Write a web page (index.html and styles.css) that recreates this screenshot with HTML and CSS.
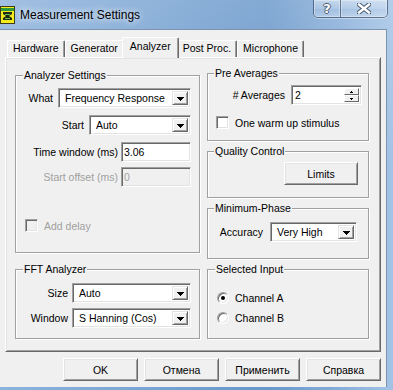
FILE: index.html
```html
<!DOCTYPE html>
<html lang="en">
<head>
    <meta charset="UTF-8">
    <title>Measurement Settings</title>
    <link rel="stylesheet" href="styles.css">
</head>
<body>
    <div class="window">
        <div class="titlebar">
            <svg class="app-icon" width="15" height="18" viewBox="0 0 15 18">
                <rect x="0" y="0" width="15" height="18" fill="#3d3d1a"/>
                <rect x="1" y="1" width="13" height="16" fill="#f4ea1c"/>
                <rect x="1" y="2" width="13" height="3" fill="#2f9a3a"/>
                <path d="M3 6h9v2l-3 2 3 2v2H3v-2l3-2-3-2z" fill="#1d2a14"/>
                <rect x="5" y="8" width="5" height="1" fill="#6cc04a"/>
                <rect x="5" y="12" width="5" height="1" fill="#6cc04a"/>
            </svg>
            <span class="title">Measurement Settings</span>
            <div class="caption-buttons">
                <div class="cap-btn cap-help">?</div>
                <div class="cap-btn cap-close">
                    <svg width="14" height="11" viewBox="0 0 14 11">
                        <path d="M2 1.5l10 8M12 1.5l-10 8" stroke="#4a5d74" stroke-width="4.4" stroke-linecap="square"/>
                        <path d="M2 1.5l10 8M12 1.5l-10 8" stroke="#fff" stroke-width="2.4" stroke-linecap="square"/>
                    </svg>
                </div>
            </div>
        </div>

        <div class="client">
            <div class="tabs">
                <div class="tab">Hardware</div>
                <div class="tab">Generator</div>
                <div class="tab active">Analyzer</div>
                <div class="tab">Post Proc.</div>
                <div class="tab">Microphone</div>
            </div>

            <div class="panel">
                <div class="col col-left">
                    <fieldset class="group group-analyzer">
                        <legend>Analyzer Settings</legend>
                        <div class="row">
                            <span class="label">What</span>
                            <div class="combo combo-what">
                                <span class="combo-text">Frequency Response</span>
                                <span class="drop-btn"><svg width="7" height="4" viewBox="0 0 7 4"><path d="M0 0h7v1h-1v1h-1v1h-1v1h-1v-1h-1v-1h-1v-1h-1z"/></svg></span>
                            </div>
                        </div>
                        <div class="row row-start">
                            <span class="label">Start</span>
                            <div class="combo combo-start">
                                <span class="combo-text">Auto</span>
                                <span class="drop-btn"><svg width="7" height="4" viewBox="0 0 7 4"><path d="M0 0h7v1h-1v1h-1v1h-1v1h-1v-1h-1v-1h-1v-1h-1z"/></svg></span>
                            </div>
                        </div>
                        <div class="row row-time">
                            <span class="label">Time window (ms)</span>
                            <div class="edit edit-short">3.06</div>
                        </div>
                        <div class="row row-offset">
                            <span class="label disabled">Start offset (ms)</span>
                            <div class="edit edit-short disabled">0</div>
                        </div>
                        <div class="check-row row-delay">
                            <span class="checkbox disabled"></span>
                            <span class="label disabled">Add delay</span>
                        </div>
                    </fieldset>

                    <fieldset class="group group-fft">
                        <legend>FFT Analyzer</legend>
                        <div class="row">
                            <span class="label">Size</span>
                            <div class="combo combo-fft">
                                <span class="combo-text">Auto</span>
                                <span class="drop-btn"><svg width="7" height="4" viewBox="0 0 7 4"><path d="M0 0h7v1h-1v1h-1v1h-1v1h-1v-1h-1v-1h-1v-1h-1z"/></svg></span>
                            </div>
                        </div>
                        <div class="row row-window">
                            <span class="label">Window</span>
                            <div class="combo combo-fft">
                                <span class="combo-text">S Hanning (Cos)</span>
                                <span class="drop-btn"><svg width="7" height="4" viewBox="0 0 7 4"><path d="M0 0h7v1h-1v1h-1v1h-1v1h-1v-1h-1v-1h-1v-1h-1z"/></svg></span>
                            </div>
                        </div>
                    </fieldset>
                </div>

                <div class="col col-right">
                    <fieldset class="group group-pre">
                        <legend>Pre Averages</legend>
                        <div class="row">
                            <span class="label"># Averages</span>
                            <div class="edit edit-spin">
                                <span>2</span>
                                <span class="spin">
                                    <span class="spin-btn"><svg width="3" height="2" viewBox="0 0 3 2"><path d="M1 0h1v1h1v1h-3v-1h1z"/></svg></span>
                                    <span class="spin-btn"><svg width="3" height="2" viewBox="0 0 3 2"><path d="M0 0h3v1h-1v1h-1v-1h-1z"/></svg></span>
                                </span>
                            </div>
                        </div>
                        <div class="check-row row-warm">
                            <span class="checkbox"></span>
                            <span class="label">One warm up stimulus</span>
                        </div>
                    </fieldset>

                    <fieldset class="group group-quality">
                        <legend>Quality Control</legend>
                        <div class="row">
                            <button class="btn btn-limits">Limits</button>
                        </div>
                    </fieldset>

                    <fieldset class="group group-phase">
                        <legend>Minimum-Phase</legend>
                        <div class="row">
                            <span class="label">Accuracy</span>
                            <div class="combo combo-accuracy">
                                <span class="combo-text">Very High</span>
                                <span class="drop-btn"><svg width="7" height="4" viewBox="0 0 7 4"><path d="M0 0h7v1h-1v1h-1v1h-1v1h-1v-1h-1v-1h-1v-1h-1z"/></svg></span>
                            </div>
                        </div>
                    </fieldset>

                    <fieldset class="group group-input">
                        <legend>Selected Input</legend>
                        <div class="check-row">
                            <span class="radio checked"></span>
                            <span class="label">Channel A</span>
                        </div>
                        <div class="check-row row-channel-b">
                            <span class="radio"></span>
                            <span class="label">Channel B</span>
                        </div>
                    </fieldset>
                </div>
            </div>

            <div class="dialog-buttons">
                <button class="btn">OK</button>
                <button class="btn">Отмена</button>
                <button class="btn">Применить</button>
                <button class="btn">Справка</button>
            </div>
        </div>
    </div>
</body>
</html>
```

FILE: styles.css
```css
* {
    box-sizing: border-box;
}

body {
    margin: 0;
    width: 393px;
    height: 390px;
    overflow: hidden;
    font-family: "Liberation Sans", Arial, sans-serif;
    font-size: 10.5px;
    color: #000;
}

.window {
    width: 393px;
    height: 390px;
    display: flex;
    flex-direction: column;
    background:
        linear-gradient(rgba(255, 255, 255, 0.18), rgba(255, 255, 255, 0) 45%),
        linear-gradient(90deg, #8db2dc 0%, #80a9d6 25%, #719ecf 50%, #6897ca 68%, #86acd8 86%, #a3c3e6 100%);
}

/* title bar */
.titlebar {
    height: 29px;
    display: flex;
    align-items: center;
}

.app-icon {
    margin-top: 1px;
}

.title {
    margin-left: 5px;
    font-size: 12px;
    text-shadow: 0 0 6px rgba(255, 255, 255, 0.9), 0 0 10px rgba(255, 255, 255, 0.6);
}

.caption-buttons {
    align-self: flex-start;
    margin-left: auto;
    margin-right: 5px;
    display: flex;
    height: 18px;
    border: 1px solid rgba(35, 55, 85, 0.6);
    border-top: none;
    border-radius: 0 0 5px 5px;
    overflow: hidden;
    box-shadow: 0 1px 0 rgba(255, 255, 255, 0.4);
}

.cap-btn {
    height: 17px;
    display: flex;
    align-items: center;
    justify-content: center;
    background: linear-gradient(rgba(255, 255, 255, 0.42), rgba(255, 255, 255, 0.22) 50%, rgba(255, 255, 255, 0.08) 51%, rgba(255, 255, 255, 0.3));
    box-shadow: inset 0 0 0 1px rgba(255, 255, 255, 0.35);
}

.cap-help {
    width: 27px;
    border-right: 1px solid rgba(35, 55, 85, 0.6);
    font-family: "DejaVu Sans", sans-serif;
    font-weight: bold;
    font-size: 13px;
    color: #fff;
    text-shadow: 1px 0 #4a5d74, -1px 0 #4a5d74, 0 1px #4a5d74, 0 -1px #4a5d74;
}

.cap-close {
    width: 46px;
}

/* client area */
.client {
    flex: 1;
    margin: 0 6px 3px 0;
    padding-top: 7px;
    background: #f0f0f0;
    border-top: 1px solid #7d94af;
    border-right: 1px solid #7d94af;
    display: flex;
    flex-direction: column;
}

.tabs {
    display: flex;
    align-items: flex-end;
    height: 20px;
    margin-left: 7px;
    position: relative;
    z-index: 1;
}

.tab {
    height: 17px;
    padding: 0 5px;
    line-height: 15px;
    background: #f0f0f0;
    border: 1px solid;
    border-color: #fff #696969 transparent #fff;
    border-bottom: none;
    border-radius: 2px 2px 0 0;
    box-shadow: inset -1px 0 #a0a0a0;
}

.tab.active {
    height: 21px;
    margin: 0 -2px -1px;
    padding: 0 7px;
    line-height: 17px;
    position: relative;
}

.panel {
    margin-left: 5px;
    width: 376px;
    height: 295px;
    padding: 9px 0 0 9px;
    border: 1px solid;
    border-color: #fff #696969 #696969 #fff;
    box-shadow: inset 1px 1px #e3e3e3, inset -1px -1px #a0a0a0;
    display: flex;
    gap: 7px;
}

.col {
    display: flex;
    flex-direction: column;
}

.col-left {
    width: 185px;
    padding-top: 2px;
}

.col-right {
    width: 162px;
}

/* group boxes */
.group {
    margin: 0;
    padding: 0 8px 0 9px;
    min-width: 0;
    border: 1px solid #a0a0a0;
    box-shadow: 1px 1px #fff, inset 1px 1px #fff;
}

.group legend {
    margin-left: -2px;
    padding: 0 1px;
    line-height: 13px;
    background: #f0f0f0;
}

.group-analyzer {
    height: 184px;
    padding-top: 6px;
}

.group-fft {
    margin-top: 10px;
    height: 76px;
    padding-top: 7px;
}

.group-pre {
    height: 74px;
    padding: 5px 6px 0 8px;
}

.group-quality {
    margin-top: 4px;
    height: 53px;
    padding: 4px 10px 0 8px;
}

.group-phase {
    margin-top: 4px;
    height: 57px;
    padding: 7px 11px 0 8px;
}

.group-input {
    margin-top: 4px;
    height: 76px;
    padding: 15px 8px 0 9px;
}

/* rows */
.row {
    display: flex;
    align-items: center;
    justify-content: flex-end;
    gap: 5px;
}

.row-start,
.row-time {
    margin-top: 7px;
}

.row-time {
    gap: 3px;
}

.row-offset {
    margin-top: 5px;
    gap: 3px;
}

.row-window {
    margin-top: 5px;
}

.group-fft .row {
    gap: 4px;
}

.group-pre .row {
    gap: 6px;
}

.group-phase .row {
    gap: 7px;
}

.label {
    white-space: nowrap;
}

.disabled {
    color: #a0a0a0;
}

.check-row {
    display: flex;
    align-items: center;
    gap: 6px;
    height: 13px;
}

.row-delay {
    margin-top: 32px;
}

.row-warm {
    margin-top: 11px;
}

.row-channel-b {
    margin-top: 7px;
}

/* controls */
.combo,
.edit {
    height: 20px;
    display: flex;
    align-items: center;
    background: #fff;
    border: 1px solid;
    border-color: #a0a0a0 #fff #fff #a0a0a0;
    box-shadow: inset 1px 1px #696969, inset -1px -1px #e3e3e3;
}

.combo {
    padding: 2px 2px 2px 6px;
}

.combo-text {
    flex: 1;
    white-space: nowrap;
}

.combo-what {
    width: 133px;
}

.combo-start {
    width: 102px;
}

.combo-fft {
    width: 119px;
}

.combo-accuracy {
    width: 87px;
}

.drop-btn {
    width: 16px;
    height: 100%;
    display: flex;
    align-items: center;
    justify-content: center;
    background: #f0f0f0;
    border: 1px solid;
    border-color: #e3e3e3 #696969 #696969 #e3e3e3;
    box-shadow: inset 1px 1px #fff, inset -1px -1px #a0a0a0;
}

.drop-btn svg {
    margin-top: 1px;
}

.edit {
    padding: 0 2px;
}

.edit-short {
    width: 70px;
}

.edit.disabled {
    background: #f0f0f0;
}

.edit-spin {
    width: 71px;
    padding: 2px 2px 2px 3px;
}

.edit-spin > span:first-child {
    flex: 1;
}

.spin {
    width: 15px;
    height: 100%;
    display: flex;
    flex-direction: column;
}

.spin-btn {
    flex: 1;
    display: flex;
    align-items: center;
    justify-content: center;
    background: #f0f0f0;
    border: 1px solid;
    border-color: #fff #696969 #696969 #fff;
}

.checkbox {
    width: 13px;
    height: 13px;
    background: #fff;
    border: 1px solid;
    border-color: #a0a0a0 #fff #fff #a0a0a0;
    box-shadow: inset 1px 1px #696969, inset -1px -1px #e3e3e3;
}

.checkbox.disabled {
    background: #f0f0f0;
}

.radio {
    width: 12px;
    height: 12px;
    border-radius: 50%;
    background: #fff;
    border: 1px solid;
    border-color: #a0a0a0 #fff #fff #a0a0a0;
    box-shadow: inset 1px 1px #696969, inset -1px -1px #e3e3e3;
    display: flex;
    align-items: center;
    justify-content: center;
}

.radio.checked::after {
    content: "";
    width: 4px;
    height: 4px;
    border-radius: 50%;
    background: #000;
}

.btn {
    width: 75px;
    height: 23px;
    padding: 0;
    font-family: inherit;
    font-size: 10.5px;
    color: #000;
    background: #f0f0f0;
    border: 1px solid;
    border-color: #fff #696969 #696969 #fff;
    box-shadow: inset 1px 1px #e3e3e3, inset -1px -1px #a0a0a0;
}

.btn-limits {
    width: 74px;
}

.dialog-buttons {
    display: flex;
    justify-content: flex-end;
    gap: 6px;
    margin-top: 6px;
    padding-right: 5px;
}
```
